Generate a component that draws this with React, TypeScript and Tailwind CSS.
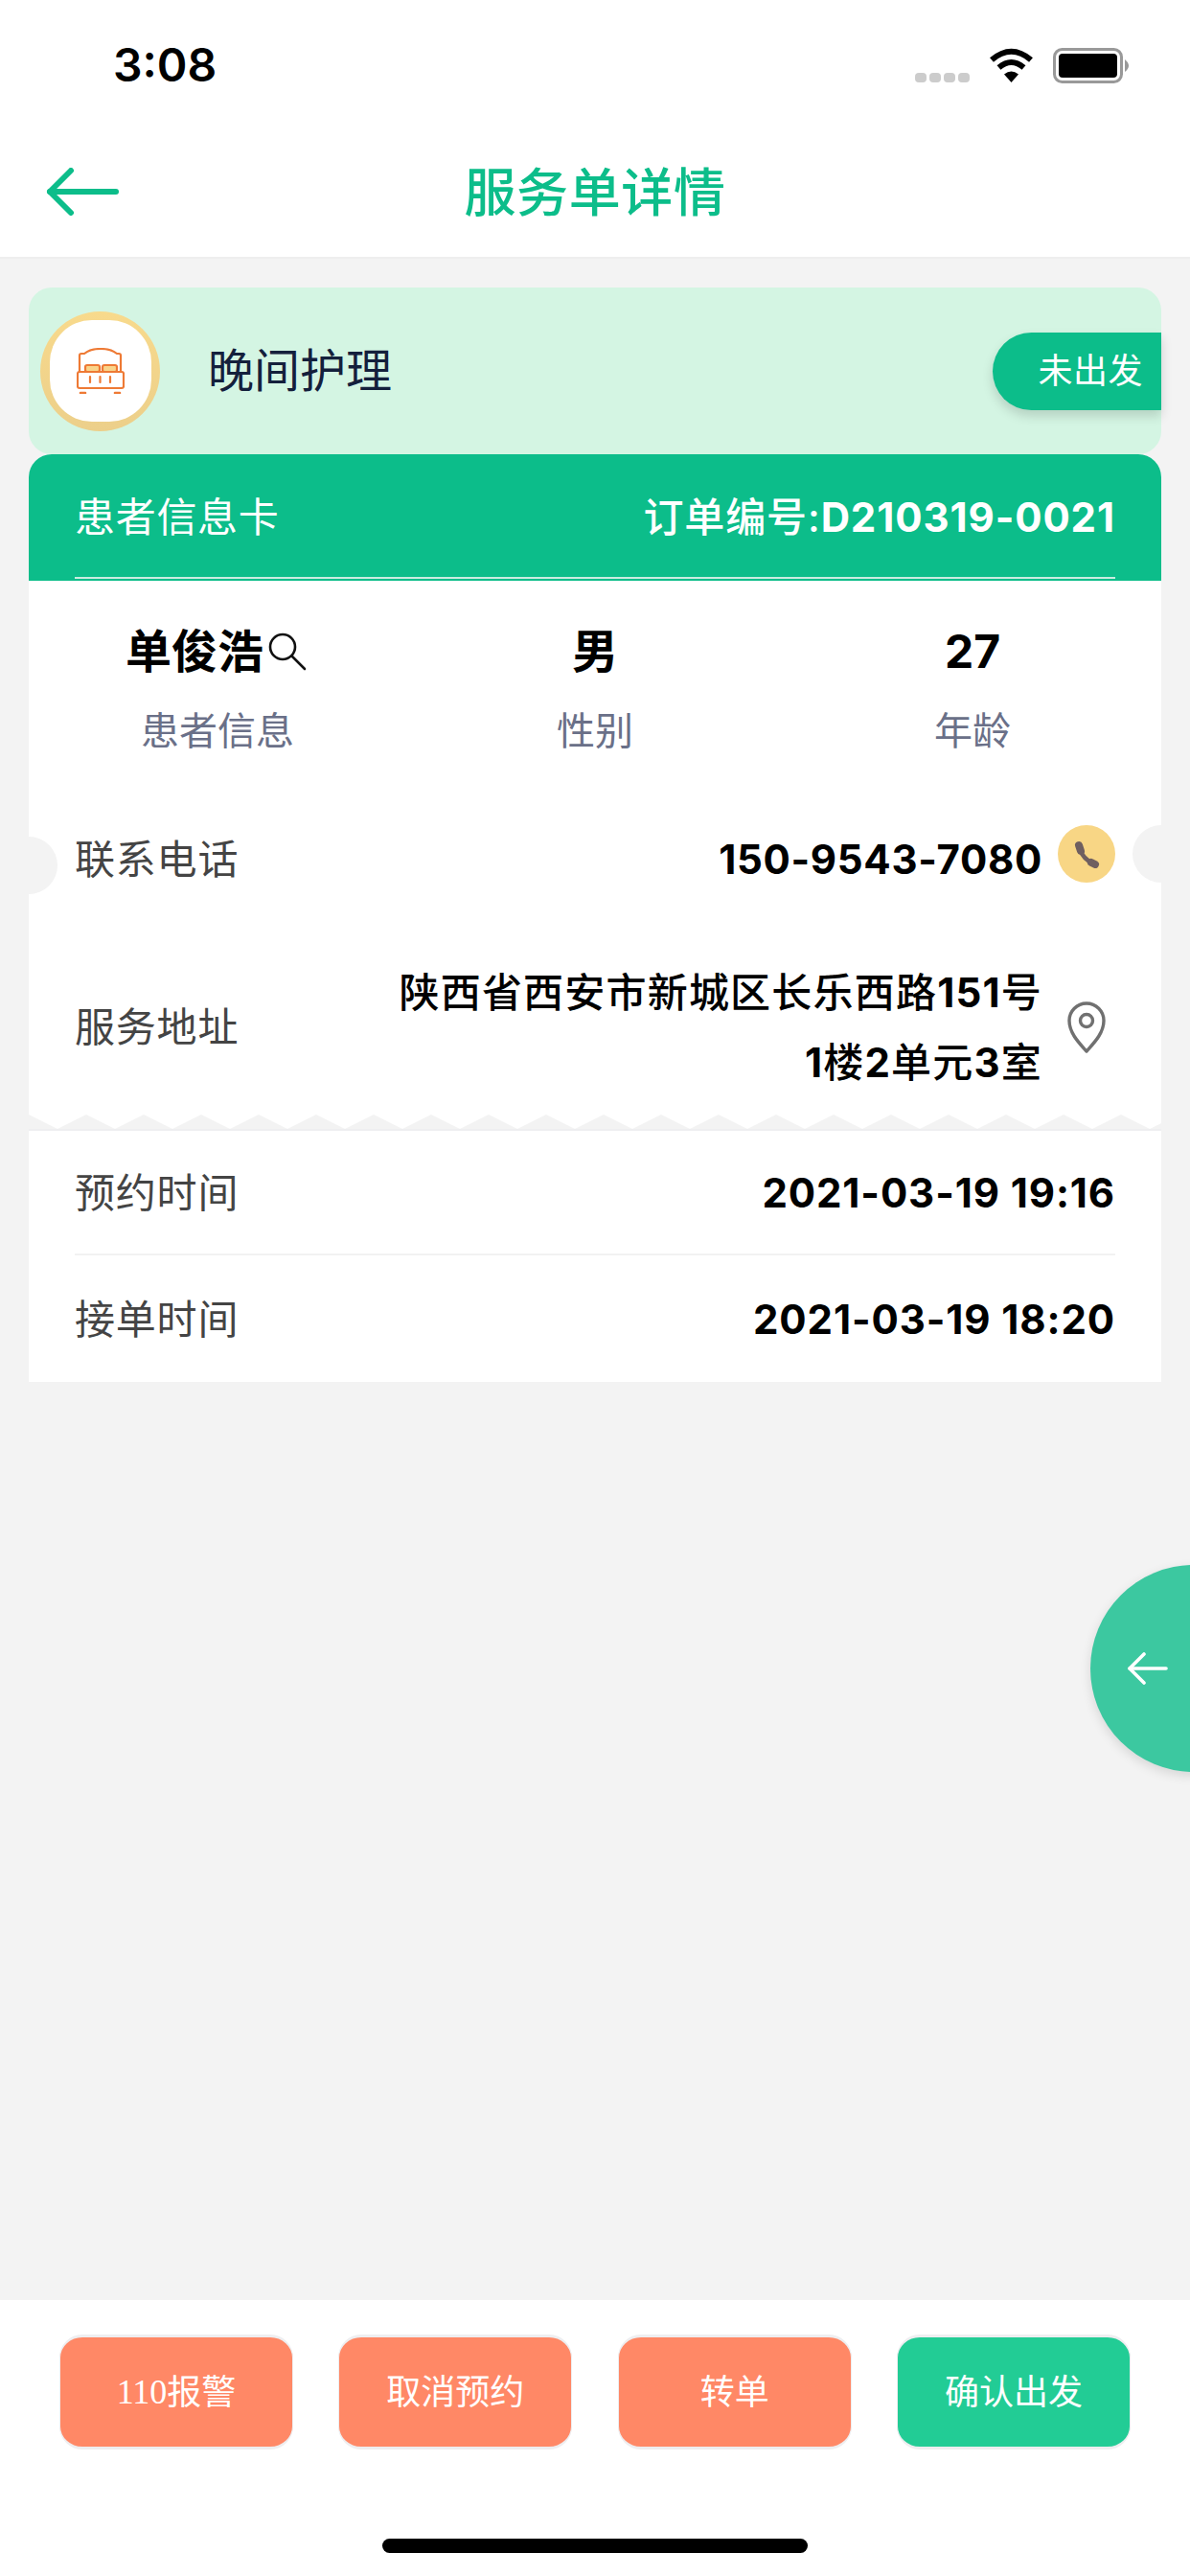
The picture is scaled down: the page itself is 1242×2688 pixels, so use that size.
import React from "react";

const font = { fontFamily: 'Inter, "Noto Sans CJK SC", sans-serif' };

function zigzag() {
  const pts: string[] = ["0,0"];
  let x = 0;
  let low = true;
  while (x < 1182) {
    x += 30;
    pts.push(`${x},${low ? 15 : 0}`);
    low = !low;
  }
  pts.push("1182,15", "0,15");
  return pts.join(" ");
}

function Row({ label, value }: { label: string; value: string }) {
  return (
    <div className="flex h-full items-center justify-between pt-[2px]">
      <span className="text-[42px] leading-[60px] tracking-[0.8px] text-[#444444]">{label}</span>
      <span className="text-[42px] leading-[60px] font-bold tracking-[0.9px] text-black">{value}</span>
    </div>
  );
}

function Btn({ children, bg }: { children: React.ReactNode; bg: string }) {
  return (
    <div className={`flex h-[120px] w-[244px] items-center justify-center rounded-[24px] border-x-[1px] border-y-[3px] border-[#eeeef0] text-[36px] text-white ${bg}`}>
      {children}
    </div>
  );
}

export default function App() {
  return (
    <div className="relative flex h-[2688px] w-[1242px] flex-col overflow-hidden bg-[#f3f3f3]" style={font}>
      {/* header */}
      <header className="h-[270px] border-b-2 border-[#eeeeee] bg-white">
        <div className="flex h-[136px] items-center justify-between pl-[118px] pr-[64px]">
          <span className="text-[48px] leading-[60px] font-semibold text-black">3:08</span>
          <div className="flex items-center">
            <div className="mt-[26px] mr-[20px] flex gap-[3px]">
              <span className="h-[10px] w-[12px] rounded-[4px] bg-[#cccccc]" />
              <span className="h-[10px] w-[12px] rounded-[4px] bg-[#cccccc]" />
              <span className="h-[10px] w-[12px] rounded-[4px] bg-[#cccccc]" />
              <span className="h-[10px] w-[12px] rounded-[4px] bg-[#cccccc]" />
            </div>
            <svg width="47" height="36" viewBox="0 0 47 36" className="mr-[20px]">
              <path d="M3 12.5 Q23.5 -5 44 12.5" fill="none" stroke="#000" strokeWidth="6" />
              <path d="M10.5 20.5 Q23.5 9.5 36.5 20.5" fill="none" stroke="#000" strokeWidth="6" />
              <path d="M16 27.5 Q23.5 21.5 31 27.5 L23.5 36 Z" fill="#000" />
            </svg>
            <svg width="79" height="37" viewBox="0 0 79 37">
              <rect x="1.5" y="1.5" width="70" height="34" rx="8" fill="none" stroke="#999999" strokeWidth="3" />
              <rect x="6" y="6" width="61" height="25" rx="4" fill="#000" />
              <path d="M75 12 Q83 18.5 75 25 Z" fill="#999999" />
            </svg>
          </div>
        </div>
        <div className="relative flex h-[132px] items-center justify-center">
          <span className="text-[54px] leading-[70px] font-medium tracking-[0.6px] text-[#0cbd8a]">服务单详情</span>
          <svg width="76" height="50" viewBox="0 0 76 50" className="absolute left-[48px] top-[39px]" fill="none" stroke="#0cbd8a" strokeWidth="6" strokeLinecap="round" strokeLinejoin="round">
            <path d="M73 25H4" />
            <path d="M26 3 L4 25 L26 47" />
          </svg>
        </div>
      </header>

      {/* body */}
      <main className="flex-1 px-[30px] pt-[30px]">
        <div className="flex h-[174px] items-center rounded-[24px] bg-[#d4f5e3] pl-[12px]">
          <div className="flex h-[125px] w-[125px] items-center justify-center rounded-full bg-linear-to-b from-[#f8da8c] to-[#eccf8a]">
            <div className="flex h-[106px] w-[106px] items-center justify-center rounded-[44px] bg-white">
              <svg width="50" height="48" viewBox="0 0 50 48" fill="none" stroke="#ee7a35" strokeWidth="2.2" strokeLinecap="round" strokeLinejoin="round">
                <path d="M3 25 V8 Q3 6 5 6 H8 Q14 1 25 1 Q36 1 42 6 H44 Q46 6 46 8 V25" />
                <rect x="9" y="18" width="15" height="7" rx="2" fill="#f9d48a" />
                <rect x="27" y="18" width="15" height="7" rx="2" fill="#f9d48a" />
                <rect x="1" y="25" width="48" height="17" rx="2" />
                <path d="M14 30V36M24.5 30V36M35 30V36" />
                <path d="M4 47H9M40 47H45" strokeWidth="2.6" />
              </svg>
            </div>
          </div>
          <span className="ml-[50px] text-[48px] leading-[60px] text-[#14203c]">晚间护理</span>
          <div className="ml-auto flex h-[81px] w-[176px] items-center justify-end rounded-l-[41px] bg-[#0cbd8a] pr-[19px] text-[36px] tracking-[0.5px] text-white shadow-[0_6px_12px_rgba(0,0,0,0.15)]">
            未出发
          </div>
        </div>

        <div className="relative overflow-hidden rounded-t-[24px] bg-white">
          <div className="h-[132px] bg-[#0cbd8a] px-[48px]">
            <div className="flex h-[130px] items-center justify-between border-b-2 border-[#c9ece0] pt-[4px]">
              <span className="text-[42px] leading-[60px] tracking-[0.7px] text-white">患者信息卡</span>
              <span className="text-[42px] leading-[60px] font-medium tracking-[0.9px] text-white">
                订单编号:<span className="font-bold">D210319-0021</span>
              </span>
            </div>
          </div>

          <div className="grid grid-cols-3 pt-[44px] text-center">
            <div>
              <div className="mr-[3px] flex h-[60px] items-center justify-center text-[48px] leading-[60px] font-semibold text-black">
                单俊浩
                <svg width="40" height="40" viewBox="0 0 40 40" className="ml-[5px]" fill="none" stroke="#111" strokeWidth="2.6" strokeLinecap="round">
                  <circle cx="15" cy="15" r="13" />
                  <path d="M25 25 L38 38" />
                </svg>
              </div>
              <div className="mt-[28px] text-[40px] leading-[50px] text-[#6a7088]">患者信息</div>
            </div>
            <div>
              <div className="h-[60px] text-[48px] leading-[60px] font-semibold text-black">男</div>
              <div className="mt-[28px] text-[40px] leading-[50px] text-[#6a7088]">性别</div>
            </div>
            <div>
              <div className="h-[60px] text-[48px] leading-[60px] font-bold text-black">27</div>
              <div className="mt-[28px] text-[40px] leading-[50px] text-[#6a7088]">年龄</div>
            </div>
          </div>

          {/* punched notches */}
          <span className="absolute left-[-30px] top-[399px] h-[60px] w-[60px] rounded-full bg-[#f3f3f3]" />
          <span className="absolute right-[-30px] top-[387px] h-[60px] w-[60px] rounded-full bg-[#f3f3f3]" />

          <div className="mt-[73px] flex h-[72px] items-start justify-between px-[48px]">
            <span className="text-[42px] leading-[72px] tracking-[0.8px] text-[#444444]">联系电话</span>
            <div className="flex items-start gap-[16px]">
              <span className="text-[42px] leading-[72px] font-bold tracking-[0.7px] text-black">150-9543-7080</span>
              <span className="flex h-[60px] w-[60px] items-center justify-center rounded-full bg-[#f8d685]">
                <svg width="28" height="30" viewBox="0 0 28 30" fill="none" stroke="#6f5f60" strokeLinecap="round">
                  <path d="M6 6 L8 12" strokeWidth="8" />
                  <path d="M7 10 C9 16 14 22 21 25" strokeWidth="4.5" />
                  <path d="M19 24 L23 26" strokeWidth="8" />
                </svg>
              </span>
            </div>
          </div>

          <div className="mt-[66px] flex items-center justify-between px-[48px]">
            <span className="text-[42px] leading-[60px] tracking-[0.8px] text-[#444444]">服务地址</span>
            <div className="flex items-center gap-[16px]">
              <div className="text-right text-[42px] leading-[73px] font-medium tracking-[1.2px] text-black">
                <div>陕西省西安市新城区长乐西路<span className="font-bold">151</span>号</div>
                <div><span className="font-bold">1</span>楼<span className="font-bold">2</span>单元<span className="font-bold">3</span>室</div>
              </div>
              <span className="flex w-[60px] justify-center">
                <svg width="40" height="54" viewBox="0 0 40 54" fill="none" stroke="#707070" strokeWidth="3.4" strokeLinejoin="round">
                  <path d="M20 52 C12 43 2 33 2 20 A18 18 0 0 1 38 20 C38 33 28 43 20 52 Z" />
                  <circle cx="20" cy="20" r="6.5" />
                </svg>
              </span>
            </div>
          </div>

          <svg width="1182" height="15" viewBox="0 0 1182 15" className="mt-[18px] block">
            <polygon points={zigzag()} fill="#f3f3f3" />
          </svg>

          <div className="border-t-2 border-[#eeeef0] px-[48px]">
            <div className="h-[130px] border-b-2 border-[#f2f2f2]">
              <Row label="预约时间" value="2021-03-19 19:16" />
            </div>
            <div className="h-[132px]">
              <Row label="接单时间" value="2021-03-19 18:20" />
            </div>
          </div>
        </div>
      </main>

      {/* floating side button */}
      <div className="absolute left-[1138px] top-[1633px] flex h-[216px] w-[216px] items-center rounded-full bg-[#3cc8a0] pl-[38px] shadow-[0_4px_12px_rgba(0,0,0,0.12)]">
        <svg width="44" height="34" viewBox="0 0 44 34" fill="none" stroke="#fff" strokeWidth="3.6" strokeLinecap="round" strokeLinejoin="round">
          <path d="M41 17H3" />
          <path d="M18 2 L3 17 L18 32" />
        </svg>
      </div>

      {/* footer */}
      <footer className="h-[288px] bg-white pt-[36px]">
        <div className="flex justify-between px-[62px]">
          <Btn bg="bg-[#ff8866]"><span style={{ fontFamily: '"Liberation Serif", "Noto Sans CJK SC", serif' }}>110</span>报警</Btn>
          <Btn bg="bg-[#ff8866]">取消预约</Btn>
          <Btn bg="bg-[#ff8866]">转单</Btn>
          <Btn bg="bg-[#22cc95]">确认出发</Btn>
        </div>
        <div className="mx-auto mt-[93px] h-[15px] w-[444px] rounded-full bg-black" />
      </footer>
    </div>
  );
}
